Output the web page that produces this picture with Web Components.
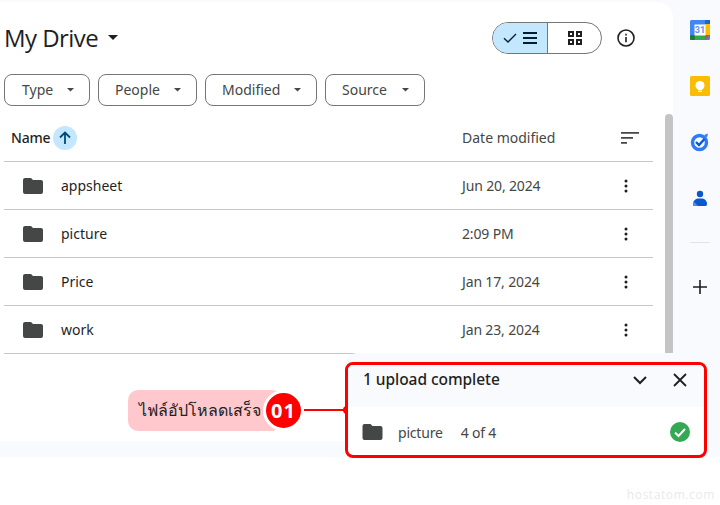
<!DOCTYPE html>
<html lang="en"><head><meta charset="utf-8"><title>My Drive</title>
<style>html,body{margin:0;padding:0;background:#fff}body{width:720px;height:505px;overflow:hidden;font-family:"Noto Sans",sans-serif;position:relative}</style>
</head><body>
<x-app></x-app>
<script>
const FOLDER='<svg viewBox="0 0 20 16" width="20" height="16"><path fill="#444746" d="M2 0h6l2 2h8a2 2 0 0 1 2 2v10a2 2 0 0 1-2 2H2a2 2 0 0 1-2-2V2a2 2 0 0 1 2-2z"/></svg>';
function def(name,css,html){
  customElements.define(name,class extends HTMLElement{
    constructor(){super();const r=this.attachShadow({mode:'open'});r.innerHTML='<style>'+css+'</style>'+(typeof html==='function'?html(this):html);}
  });
}
def('x-chip',`:host{display:flex;align-items:center;box-sizing:border-box;height:32px;border:1px solid #747775;border-radius:8px;font:400 14px/20px "Noto Sans",sans-serif;color:#444746;padding-left:var(--pl,16px);padding-right:15px}
svg{margin-left:auto;display:block}`,`<slot></slot><svg width="7" height="4" viewBox="0 0 7 4"><path d="M0 0h7L3.500 3.500z" fill="#444746"/></svg>`);
def('x-view-toggle',`:host{display:flex;box-sizing:border-box;width:110px;height:32px;border:1px solid #747775;border-radius:16px;overflow:hidden}
div{display:flex;align-items:center;justify-content:center;height:100%}
.a{width:55px;background:#c2e7ff;border-right:1px solid #747775;gap:6px;box-sizing:border-box}
.b{flex:1}`,`<div class="a"><svg width="14" height="10" viewBox="0 0 14 10"><path d="M1 5.200 5 9 13 1" fill="none" stroke="#001d35" stroke-width="1.300"/></svg><svg width="14" height="12" viewBox="0 0 14 12"><path d="M0 0h14v2H0zM0 5h14v2H0zM0 10h14v2H0z" fill="#001d35"/></svg></div><div class="b"><svg width="14" height="14" viewBox="0 0 14 14"><g fill="none" stroke="#1f1f1f" stroke-width="2"><rect x="1" y="1" width="4" height="4"/><rect x="9" y="1" width="4" height="4"/><rect x="1" y="9" width="4" height="4"/><rect x="9" y="9" width="4" height="4"/></g></svg></div>`);
def('x-header',`:host{display:block;padding:0 0 0 4px}
.top{display:flex;align-items:center;height:69px;padding-top:2px;box-sizing:border-box}
h1{margin:0;font:400 24px/32px "Open Sans",sans-serif;color:#1f1f1f;letter-spacing:-.55px}
.caret{margin-left:10px}
x-view-toggle{margin-left:auto}
.info{margin:0 38px 0 15px;display:block}
.chips{display:flex;gap:8px;height:32px;margin-top:3px}
`,`<div class="top"><h1>My Drive</h1><svg class="caret" width="10" height="5" viewBox="0 0 10 5"><path d="M0 0h10L5 5z" fill="#1f1f1f"/></svg><x-view-toggle></x-view-toggle><svg class="info" width="18" height="18" viewBox="0 0 18 18"><circle cx="9" cy="9" r="8" fill="none" stroke="#1f1f1f" stroke-width="1.600"/><path d="M8.200 8h1.600v5.200H8.200zM8.200 4.800h1.600v1.700H8.200z" fill="#1f1f1f"/></svg></div>
<div class="chips"><x-chip style="width:86px;--pl:17px">Type</x-chip><x-chip style="width:99px">People</x-chip><x-chip style="width:112px">Modified</x-chip><x-chip style="width:100px">Source</x-chip></div>`);
def('x-row',`:host{display:grid;grid-template-columns:57px 401px 1fr 35px;align-items:center;height:48px;box-sizing:border-box;border-bottom:1px solid #c7c7c7;font:400 14px/20px "Noto Sans",sans-serif;color:#1f1f1f}
.d{color:#444746;letter-spacing:-.15px}
.m{display:block;margin-left:6px}.ic{display:flex;padding-left:19px}`,
el=>`<span class="ic">${FOLDER}</span><span class="n"><slot></slot></span><span class="d">${el.getAttribute('date')}</span><svg class="m" width="4" height="14" viewBox="0 0 4 14"><g fill="#1f1f1f"><circle cx="2" cy="2" r="1.500"/><circle cx="2" cy="7" r="1.500"/><circle cx="2" cy="12" r="1.500"/></g></svg>`);
def('x-list-head',`:host{display:grid;grid-template-columns:458px 1fr 32px;align-items:center;height:50px;padding-top:2px;box-sizing:border-box;border-bottom:1px solid #c7c7c7;font:500 14px/20px "Noto Sans",sans-serif;color:#1f1f1f;margin-top:6px}
.name{display:flex;align-items:center;padding-left:7px;gap:3px;color:#1f1f1f;letter-spacing:-.2px}
.arrow{width:24px;height:24px;border-radius:50%;background:#c2e7ff;display:flex;align-items:center;justify-content:center}
.d{color:#444746;font-weight:400}svg{display:block}`,`<div class="name"><span>Name</span><span class="arrow"><svg width="12" height="14" viewBox="0 0 12 14"><path d="M6 13V1.500M1 6.500l5-5 5 5" fill="none" stroke="#004a77" stroke-width="1.800"/></svg></span></div><span class="d">Date modified</span><svg width="18" height="12" viewBox="0 0 18 12"><path d="M0 0h18v1.800H0zM0 5h12v1.800H0zM0 10h6v1.800H0z" fill="#444746"/></svg>`);
def('x-main',`:host{display:block;position:relative;background:#fff;border-radius:0 16px 0 0;height:439px;overflow:hidden}
.list{width:649px;margin-left:4px}
.sb{position:absolute;right:0;top:112px;width:8px;height:340px;background:#c4c4c4;border-radius:4px 4px 0 0}`,
`<x-header></x-header><div class="list"><x-list-head></x-list-head><x-row date="Jun 20, 2024">appsheet</x-row><x-row date="2:09 PM">picture</x-row><x-row date="Jan 17, 2024">Price</x-row><x-row date="Jan 23, 2024">work</x-row></div><div class="sb"></div>`);
def('x-side',`:host{display:flex;flex-direction:column;align-items:center;padding:18px 0 0 7px;box-sizing:border-box;width:47px}
svg{display:block}.s{height:56px;display:flex;align-items:flex-start;justify-content:center}
hr{width:20px;border:0;border-top:1px solid #e3e3e3;margin:0}
`,`<div class="s"><svg width="20" height="20" viewBox="0 0 20 20"><rect width="20" height="20" rx="1.500" fill="#4285f4"/><rect x="15" y="0" width="5" height="5" fill="#1967d2"/><rect x="15" y="4" width="5" height="11" fill="#fbbc04"/><rect x="4.500" y="15" width="11" height="5" fill="#34a853"/><rect x="0" y="15" width="5" height="5" rx="1" fill="#188038"/><path d="M15 15h5l-5 5z" fill="#ea4335"/><rect x="4.500" y="4.500" width="11" height="11" fill="#fff"/><text x="10" y="13.300" font-family="Roboto" font-size="9" font-weight="700" fill="#5b93f5" text-anchor="middle">31</text></svg></div>
<div class="s"><svg width="20" height="20" viewBox="0 0 20 20"><rect width="20" height="20" rx="1.500" fill="#fbbc04"/><circle cx="10" cy="9.500" r="4.500" fill="#fff"/><rect x="8" y="12" width="4" height="2" fill="#fff"/><rect x="8" y="14.700" width="4" height="1.100" fill="#fff"/></svg></div>
<div class="s"><svg width="20" height="20" viewBox="0 0 20 20"><circle cx="9.500" cy="10.500" r="7" fill="none" stroke="#2f7bf5" stroke-width="3.400"/><path d="M6 10l3 3 5.500-6" fill="none" stroke="#0b57d0" stroke-width="2.400"/><path d="M14 3l4-1.500-1 4z" fill="#2f7bf5"/></svg></div>
<div class="s" style="height:54px"><svg width="16" height="20" viewBox="0 0 16 20"><circle cx="8" cy="6" r="3.200" fill="#0b57d0"/><path d="M2 18c-1 0-1-1-1-2 0-3.500 3-5.500 6-5.500h2c3.500 0 6 2 6 5.500 0 1-.5 2-1.500 2z" fill="#0b57d0"/><path d="M2 18c-1 0-1-1-1-2 0-1 .3-2 .8-2.500L6 18z" fill="#4d8bf5"/></svg></div>
<hr><svg style="margin-top:37px" width="14" height="14" viewBox="0 0 14 14"><path d="M6.200 0h1.600v14H6.200zM0 6.200h14v1.600H0z" fill="#1f1f1f"/></svg>`);
def('x-upload',`:host{display:block;position:absolute;left:345px;top:362px;width:362px;height:96px;box-sizing:border-box;border:3px solid #f00;border-radius:8px;background:#fff;overflow:hidden;font-family:"Noto Sans",sans-serif}
.h{height:42px;background:#f8fafd;display:flex;align-items:center;padding:0 17px 12px 15px;box-sizing:border-box;font:500 15.500px/24px "Noto Sans",sans-serif;color:#1f1f1f;letter-spacing:-.05px}
.h span{margin-bottom:2px}
.h svg:first-of-type{margin-left:auto;margin-right:26px}
.b{display:flex;align-items:center;height:48px;padding:2px 14px 0;font:400 14px/20px "Noto Sans",sans-serif;color:#444746;box-sizing:border-box;letter-spacing:-.2px}
.b span{margin-top:2px}.b span.p{margin-left:15px}.b span.c{margin-left:18px}.b svg:last-child{margin-left:auto}svg{display:block}`,
`<div class="h"><span>1 upload complete</span><svg width="14" height="9" viewBox="0 0 14 9"><path d="M1 1l6 6 6-6" fill="none" stroke="#1f1f1f" stroke-width="2"/></svg><svg width="14" height="14" viewBox="0 0 14 14"><path d="M1 1l12 12M13 1L1 13" fill="none" stroke="#1f1f1f" stroke-width="1.800"/></svg></div>
<div class="b">${FOLDER.replace('width="20" height="16"','width="21" height="16"')}<span class="p">picture</span><span class="c">4 of 4</span><svg width="20" height="20" viewBox="0 0 20 20"><circle cx="10" cy="10" r="10" fill="#34a853"/><path d="M5 10.500l3.500 3.500L15 7" fill="none" stroke="#fff" stroke-width="2"/></svg></div>`);
def('x-callout',`:host{display:block;position:absolute;left:128px;top:390px;width:220px;height:41px}
.pill{position:absolute;left:0;top:0;width:154px;height:41px;background:#ffc8cc;border-radius:10px;font:400 16px/41px "Liberation Serif",serif;color:#222;padding-left:11px;box-sizing:border-box;white-space:nowrap}
.num{position:absolute;left:135px;top:0;width:41px;height:41px;box-sizing:border-box;border:3px solid #fff;border-radius:50%;background:#f00;color:#fff;font:700 20px/35px "Noto Sans",sans-serif;text-align:center;letter-spacing:1px}
.line{position:absolute;left:176px;top:19px;width:42px;height:2px;background:#f00}
.dot{position:absolute;left:215px;top:16px;width:8px;height:8px;border-radius:50%;background:#f00}`,
`<div class="pill" lang="th">ไฟล์อัปโหลดเสร็จ</div><div class="num">01</div><div class="line"></div><div class="dot"></div>`);
def('x-app',`:host{display:block;width:720px;height:505px;background:#fff;position:relative}
.shell{display:grid;grid-template-columns:673px 47px;background:#f8fafd;height:457px;padding-top:2px;box-sizing:border-box}
.tint{position:absolute;left:345px;top:353px;width:362px;height:100px;background:#f8fafd;border-radius:12px 12px 0 0}
.wm{position:absolute;right:5px;top:487px;font:400 12px/16px "Open Sans",sans-serif;letter-spacing:.6px;color:#e8eaed}`,
`<div class="shell"><x-main></x-main><x-side></x-side></div><div class="tint"></div><x-callout></x-callout><x-upload></x-upload><div class="wm">hostatom.com</div>`);
</script>
</body></html>
